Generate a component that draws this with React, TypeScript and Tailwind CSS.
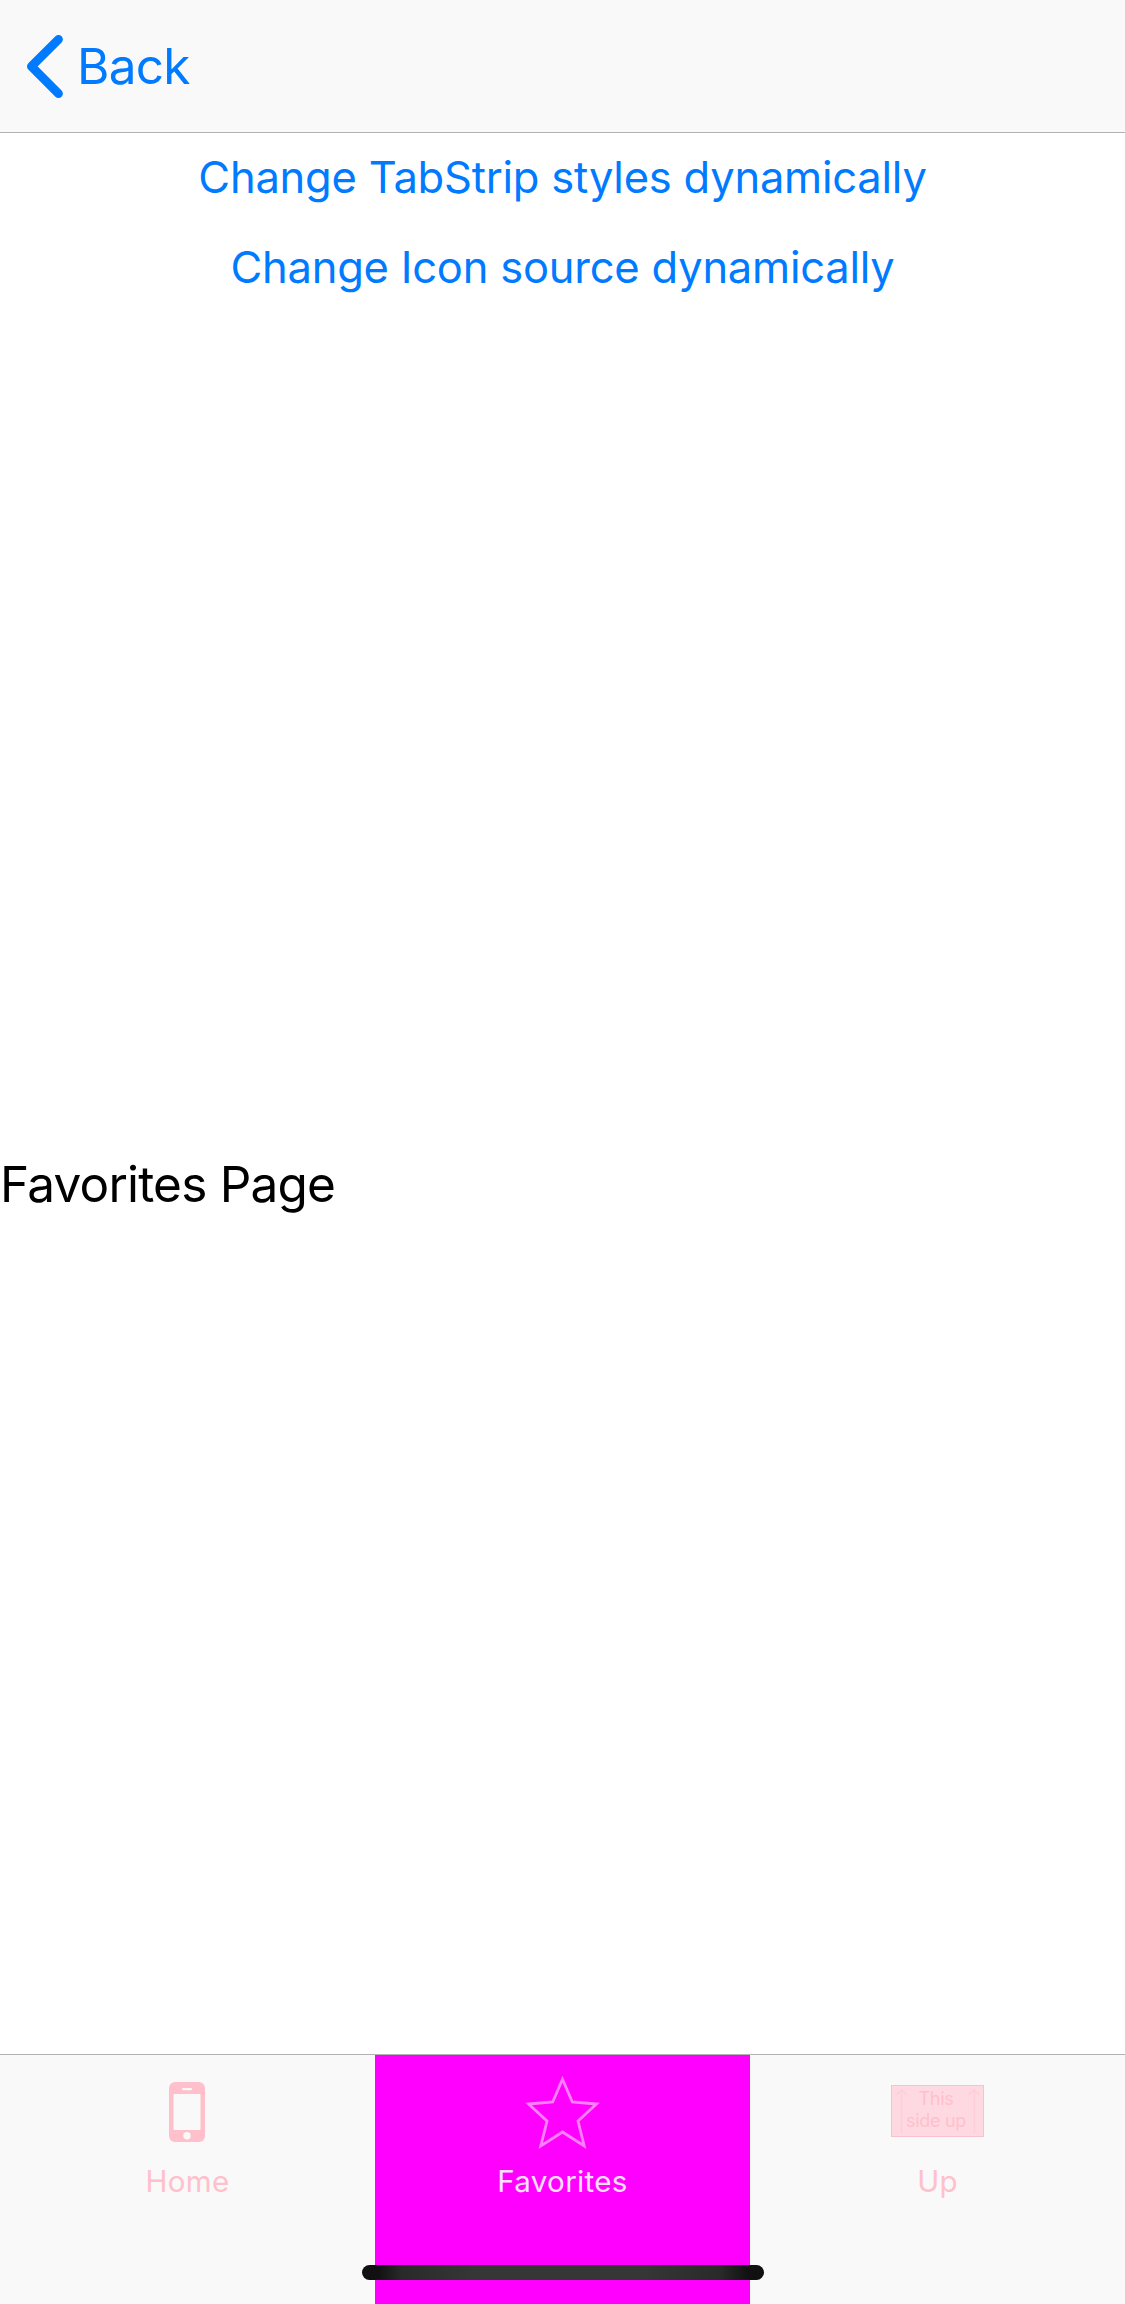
function BackChevron() {
  return (
    <svg width="42" height="66" viewBox="24 33 42 66" fill="none" aria-hidden="true">
      <path
        d="M58.5 39.3 31.4 66.4 58.5 93.6"
        stroke="#007aff"
        strokeWidth="8.8"
        strokeLinecap="round"
        strokeLinejoin="round"
      />
    </svg>
  );
}

function PhoneIcon() {
  return (
    <svg width="36" height="60" viewBox="0 0 36 60" aria-hidden="true">
      <rect width="36" height="60" rx="6" fill="#ffc0cb" />
      <rect x="4.5" y="12" width="27" height="36" rx="1" fill="#f9f9f9" />
      <rect x="13" y="6" width="10" height="2.2" rx="1.1" fill="#f9f9f9" />
      <circle cx="18" cy="53.7" r="3.7" fill="#f9f9f9" />
    </svg>
  );
}

function StarIcon() {
  return (
    <svg width="75" height="75" viewBox="524 2075 75 75" fill="none" aria-hidden="true">
      <path
        d="M561.5 2079.2 571.3 2102 595.5 2104 577 2121 583.2 2146 561.5 2132 539.8 2146 546 2121 527.5 2104 551.7 2102Z"
        stroke="#ff80ff"
        strokeWidth="2.8"
        strokeMiterlimit="10"
      />
    </svg>
  );
}

function SideUpIcon() {
  return (
    <div className="relative h-[52px] w-[93px] border border-[#fbc0cd] bg-[#ffd9e1] text-center text-[18px] leading-[22px] tracking-[-0.3px] text-[#ffc0cb]">
      <div className="pt-[2px] pr-[3px]">
        This
        <br />
        side up
      </div>
      <svg className="absolute inset-0" width="91" height="50" viewBox="0 0 91 50" fill="none" aria-hidden="true">
        <path d="M9.5 47V4M4 9l5.5-5L15 9M82.5 47V4M76 9l6.5-5 5 5" stroke="#fdced7" strokeWidth="1.5" />
      </svg>
    </div>
  );
}

export default function App() {
  return (
    <div className="flex h-[2304px] w-[1125px] flex-col bg-white font-['Inter',sans-serif]">
      <header className="flex h-[133px] shrink-0 items-center border-b border-[#b2b2b2] bg-[#f9f9f9] pl-6">
        <button className="flex items-center gap-[11px] text-[#007aff]">
          <BackChevron />
          <span className="pt-px text-[49.5px] leading-none tracking-[-0.7px]">Back</span>
        </button>
      </header>

      <main className="flex flex-1 flex-col">
        <button className="h-[89px] pb-px text-center text-[43.5px] leading-[88px] tracking-[-0.22px] text-[#007aff]">
          Change TabStrip styles dynamically
        </button>
        <button className="h-[90px] text-center text-[43.5px] leading-[90px] tracking-[-0.22px] text-[#007aff]">
          Change Icon source dynamically
        </button>
        <div className="flex flex-1 items-center">
          <p className="pt-[3px] text-[49.5px] leading-none tracking-[-0.8px] text-black">Favorites Page</p>
        </div>
      </main>

      <nav className="relative grid h-[250px] shrink-0 grid-cols-3 border-t border-[#b2b2b2] bg-[#f9f9f9] text-[29.5px] text-[#ffc0cb]">
        <button className="flex flex-col items-center pt-[19px]">
          <span className="flex h-[76px] items-center pr-px"><PhoneIcon /></span>
          <span className="mt-[13px] leading-[36px] tracking-[0.35px]">Home</span>
        </button>
        <button className="flex flex-col items-center bg-[#ff00ff] pt-[19px] text-[#ffe0ff]">
          <span className="flex h-[76px] items-center"><StarIcon /></span>
          <span className="mt-[13px] leading-[36px] tracking-[0.35px]">Favorites</span>
        </button>
        <button className="flex flex-col items-center pt-[19px]">
          <span className="flex h-[76px] items-center pb-[2px]"><SideUpIcon /></span>
          <span className="mt-[13px] leading-[36px] tracking-[0.35px]">Up</span>
        </button>
        <div className="absolute bottom-6 left-[362px] h-[15px] w-[402px] rounded-full bg-[linear-gradient(90deg,#101010_0%,#111_4%,#2a2a2a_10%,#363636_28%,#363636_70%,#2a2a2a_89%,#111_96%,#101010_100%)]" />
      </nav>
    </div>
  );
}
